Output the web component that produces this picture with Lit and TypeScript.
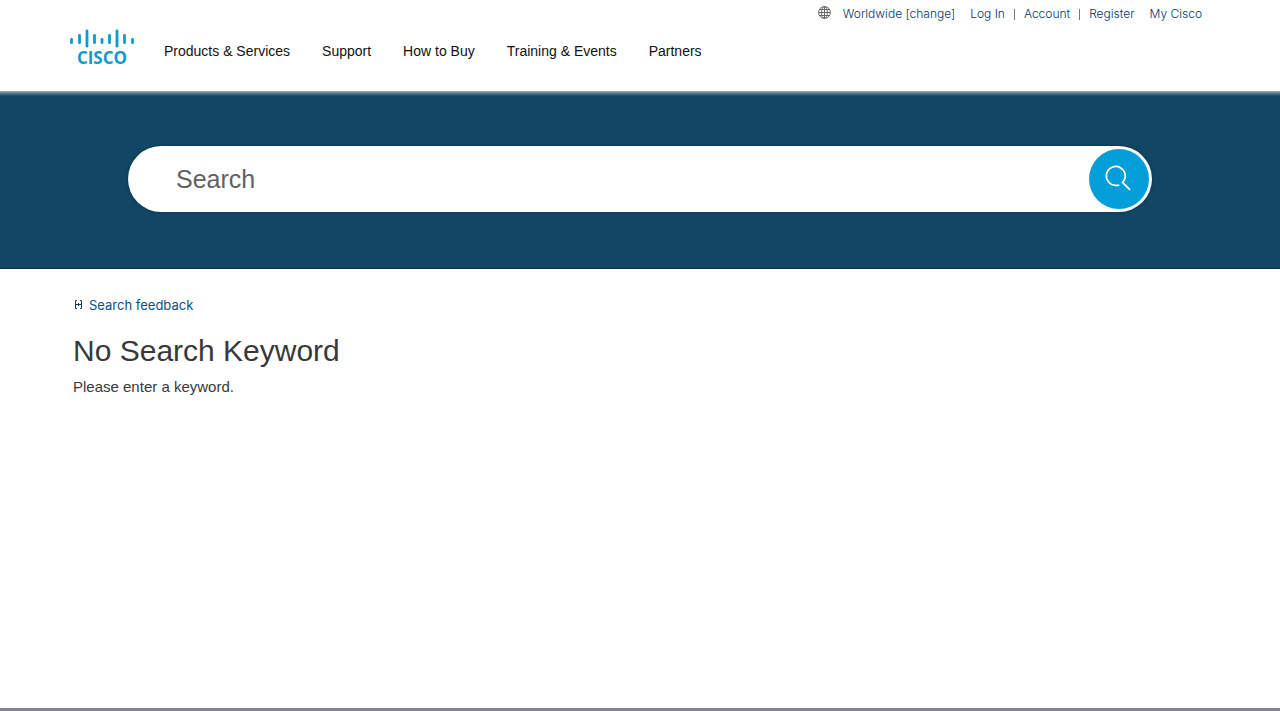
import { LitElement, html, css, svg } from "lit";
import { customElement } from "lit/decorators.js";

const bars = [
  [71.5, 38, 43], [79.5, 34, 43], [87, 29.5, 46.5], [94.5, 34, 43], [102, 38, 43],
  [109.5, 34, 43], [117, 29.5, 46.5], [124.5, 34, 43], [132.5, 38, 43],
];

@customElement("cisco-header")
export class CiscoHeader extends LitElement {
  static styles = css`
    :host { display: block; background: #fff; }
    .bar { display: flex; height: 91px; padding: 0 78px 0 69px; }
    .logo { display: block; margin: 28px 29px 0 0; }
    .logo svg { display: block; overflow: visible; }
    .wordmark { font: 700 17px "Open Sans", sans-serif; fill: #1597cc; stroke: none; text-anchor: middle; }
    nav { display: flex; align-items: flex-start; gap: 32px; padding-top: 41px; }
    a { color: #111; text-decoration: none; white-space: nowrap; font-size: 14px; line-height: 20px; }
    nav a { font-family: "Liberation Sans", Arial, sans-serif; }
    .utility { display: flex; align-items: center; height: 20px; padding-top: 4px; margin-left: auto; }
    .utility a { color: #00386e; font-size: 12px; font-weight: 300; }
    .globe { margin: 0 12px 4px 0; }
    .login { margin-left: 15px; }
    .rule { width: 1px; height: 11px; margin: 0 9px; background: #777; }
  `;
  render() {
    return html`<header class="bar">
      <a class="logo" href="#" aria-label="Cisco">
        <svg width="66" height="44" viewBox="69 28 66 44" fill="none" stroke="#1597cc" stroke-width="2.8" stroke-linecap="round">
          ${bars.map(([x, a, b]) => svg`<path d="M${x} ${a + 1.3}V${b - 0.3}" />`)}
          <text class="wordmark" x="102" y="64">CISCO</text>
        </svg>
      </a>
      <nav aria-label="Main">
        <a href="#">Products &amp; Services</a><a href="#">Support</a><a href="#">How to Buy</a><a href="#">Training &amp; Events</a><a href="#">Partners</a>
      </nav>
      <div class="utility">
        <svg class="globe" width="13" height="13" viewBox="0 0 13 13" fill="none" stroke="#666" stroke-width="1">
          <circle cx="6.5" cy="6.5" r="5.9" /><ellipse cx="6.5" cy="6.5" rx="2.9" ry="5.9" />
          <path d="M6.5.5v12M.5 6.5h12M1.5 3.5h10M1.5 9.5h10" />
        </svg>
        <a href="#">Worldwide [change]</a>
        <a class="login" href="#">Log In</a><span class="rule"></span>
        <a href="#">Account</a><span class="rule"></span>
        <a href="#">Register</a>
        <a class="login" href="#">My Cisco</a>
      </div>
    </header>`;
  }
}

@customElement("search-band")
export class SearchBand extends LitElement {
  static styles = css`
    :host {
      display: block;
      padding: 55px 10% 56px;
      border-bottom: 1px solid #082f47;
      background: linear-gradient(#9fb0ba, #5f8093 2px, #114765 5px) #114765;
    }
    form { display: flex; height: 60px; padding: 3px; border-radius: 33px; background: #fff; box-shadow: 0 0 3px #072c42; }
    input {
      flex: 1; min-width: 0; padding: 0 45px; border: 0; border-radius: 30px; outline: 0;
      background: none; color: #58585b; font: 25px "Liberation Sans", Arial, sans-serif;
    }
    input::placeholder { color: #626262; opacity: 1; }
    button { width: 60px; height: 60px; padding: 0; border: 0; border-radius: 50%; background: #049fd9; cursor: pointer; }
    button svg { display: block; margin: auto; }
  `;
  render() {
    return html`<form role="search" @submit=${(e: Event) => e.preventDefault()}>
      <input type="search" aria-label="Search" placeholder="Search" />
      <button aria-label="Submit search">
        <svg width="60" height="60" viewBox="0 0 60 60" fill="none" stroke="#fff" stroke-width="1.7">
          <path d="M30.3 36.3H27A9.4 9.4 0 1 1 33.6 33.4L41 40.8" />
        </svg>
      </button>
    </form>`;
  }
}

@customElement("app-root")
export class AppRoot extends LitElement {
  static styles = css`
    :host {
      display: flex; flex-direction: column; min-height: 100vh; box-sizing: border-box;
      border-bottom: 3px solid #85858f; background: #fff;
      font-family: Inter, "Liberation Sans", sans-serif; color: #39393b;
    }
    main { padding: 25px 73px; }
    .feedback { display: inline-flex; align-items: center; gap: 6px; color: #0b4f86; font-size: 13px; line-height: 20px; text-decoration: none; }
    .feedback svg { margin-left: 1px; }
    h1, p { font-family: "Liberation Sans", Arial, sans-serif; }
    h1 { margin: 16px 0 5px; font-size: 30px; line-height: 40px; font-weight: 400; }
    p { margin: 0; font-size: 15px; line-height: 22px; }
  `;
  render() {
    return html`<cisco-header></cisco-header>
      <search-band></search-band>
      <main>
        <a class="feedback" href="#">
          <svg width="9" height="10" viewBox="0 0 9 10" fill="none" stroke="#163e5c" stroke-width="1">
            <path d="M3 .5H1.5v8H3M6 .5h1.5v8H6M2 4.5h5M4.5 3v3" />
          </svg>Search feedback</a>
        <h1>No Search Keyword</h1>
        <p>Please enter a keyword.</p>
      </main>`;
  }
}
